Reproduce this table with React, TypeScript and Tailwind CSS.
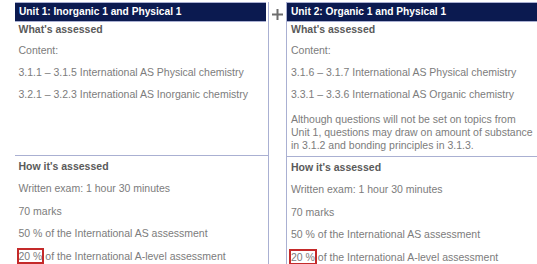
const unit1Content = [
  "3.1.1 – 3.1.5 International AS Physical chemistry",
  "3.2.1 – 3.2.3 International AS Inorganic chemistry",
];

const unit2Content = [
  "3.1.6 – 3.1.7 International AS Physical chemistry",
  "3.3.1 – 3.3.6 International AS Organic chemistry",
];

function Assessment() {
  return (
    <div className="flex flex-col gap-[9px] pt-[4px]">
      <p className="font-bold text-[#5a5a5a]">How it's assessed</p>
      <p>Written exam: 1 hour 30 minutes</p>
      <p className="mt-[1px]">70 marks</p>
      <p>50 % of the International AS assessment</p>
      <p className="mt-[1px]">
        <span className="outline-2 outline-[#c42a2a] outline-offset-[0px]">20 %</span> of the
        International A-level assessment
      </p>
    </div>
  );
}

function Header({ title }: { title: string }) {
  return (
    <div className="border-y border-[#aab0d2] bg-[#0b1a50]">
      <div className="h-[18px] px-[4px] text-[10.2px] font-bold leading-[18px] text-white">
        {title}
      </div>
    </div>
  );
}

function Plus() {
  return (
    <svg width="13" height="13" viewBox="0 0 13 13" className="mt-[6px]">
      <path d="M6.5 1v11M1 6.5h11" stroke="#6e6e6e" strokeWidth="2" />
    </svg>
  );
}

export default function App() {
  return (
    <div
      className="flex h-[264px] w-[537px] overflow-hidden bg-white pt-[2px] text-[10.5px] leading-[13px] text-[#7c7c7c]"
      style={{ fontFamily: '"Liberation Sans", Arial, sans-serif' }}
    >
      <div className="ml-[15px] w-[254px] shrink-0 border-r border-[#aab0d2]">
        <div className="mr-[2px]">
          <Header title="Unit 1: Inorganic 1 and Physical 1" />
        </div>
        <div className="h-[134px] border-b border-[#aab0d2] px-[3.5px]">
          <div className="flex flex-col gap-[9px] pt-[1px]">
            <p className="font-bold text-[#5a5a5a]">What's assessed</p>
            <p className="-mt-[1px]">Content:</p>
            {unit1Content.map((line) => (
              <p key={line}>{line}</p>
            ))}
          </div>
        </div>
        <div className="px-[3.5px]">
          <Assessment />
        </div>
      </div>

      <div className="flex w-[17px] shrink-0 justify-center">
        <Plus />
      </div>

      <div className="w-[260px] shrink-0 border-l border-[#aab0d2]">
        <Header title="Unit 2: Organic 1 and Physical 1" />
        <div className="h-[135px] border-b border-[#aab0d2] px-[4px]">
          <div className="flex flex-col gap-[9px] pt-[1px]">
            <p className="font-bold text-[#5a5a5a]">What's assessed</p>
            <p className="-mt-[1px]">Content:</p>
            {unit2Content.map((line) => (
              <p key={line}>{line}</p>
            ))}
            <p className="mt-[3px] whitespace-nowrap">
              Although questions will not be set on topics from
              <br />
              Unit 1, questions may draw on amount of substance
              <br />
              in 3.1.2 and bonding principles in 3.1.3.
            </p>
          </div>
        </div>
        <div className="px-[4px]">
          <Assessment />
        </div>
      </div>
    </div>
  );
}
